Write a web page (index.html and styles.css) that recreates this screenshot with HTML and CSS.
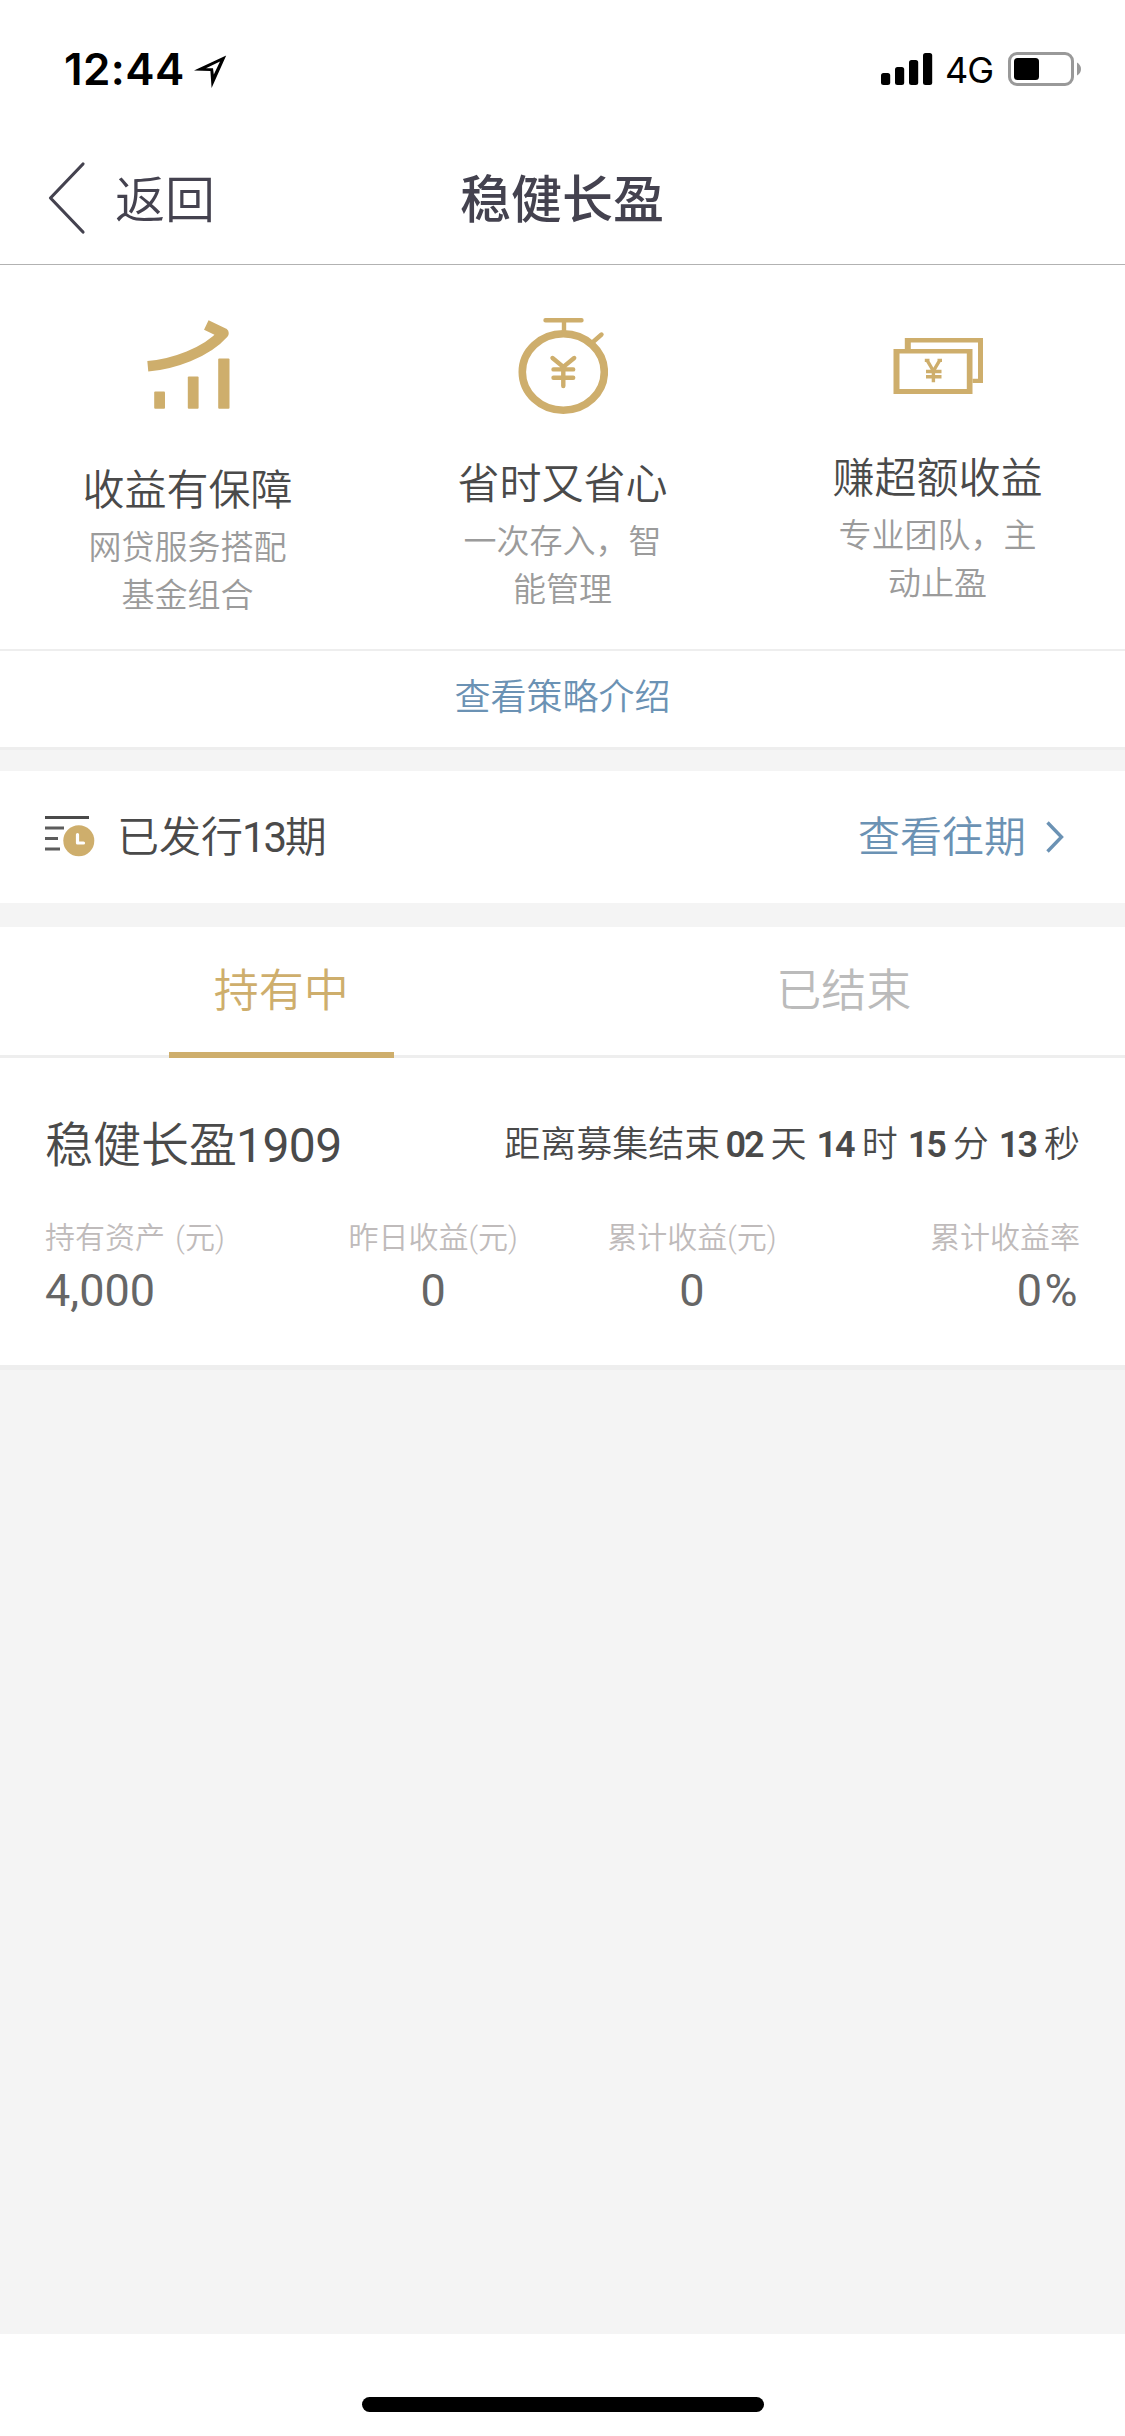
FILE: index.html
```html
<!DOCTYPE html>
<html lang="zh-CN">
<head>
<meta charset="utf-8">
<title>稳健长盈</title>
<link rel="stylesheet" href="styles.css">
</head>
<body>
<div class="status">
  <div class="status-left">
    <span class="clock">12:44</span>
    <svg class="location" width="34" height="34" viewBox="0 0 34 34"><path fill-rule="evenodd" d="M1 16.500 33.200 1.500 18.600 34 17.400 17ZM13 14.200 20 14.200 20.800 20.500 27 7.500Z"/></svg>
  </div>
  <div class="status-right">
    <svg width="52" height="34" viewBox="0 0 52 34"><rect x="0" y="21" width="9.200" height="12" rx="2.500"/><rect x="14" y="15" width="9.200" height="18" rx="2.500"/><rect x="28" y="8" width="9.200" height="25" rx="2.500"/><rect x="42" y="1" width="9.200" height="32" rx="2.500"/></svg>
    <span class="network">4G</span>
    <svg class="battery" width="74" height="34" viewBox="0 0 74 34"><rect x="1.500" y="1.500" width="63" height="31" rx="7.500" fill="none" stroke="#999" stroke-width="3"/><rect x="6" y="6" width="25" height="22" rx="3.500"/><path d="M69 10.500q4 2.500 4 6.500t-4 6.500z" fill="#999"/></svg>
  </div>
</div>
<header class="navbar">
  <a class="back">
    <svg width="38" height="74" viewBox="0 0 38 74"><path d="M35 3 2.500 37 35 71" fill="none" stroke="#44424f" stroke-width="3.200" stroke-linecap="round" stroke-linejoin="round"/></svg>
    <span>返回</span>
  </a>
  <h1 class="title">稳健长盈</h1>
</header>
<section class="features">
  <div class="feature">
    <svg width="90" height="102" viewBox="0 0 90 102"><g fill="#ceae6c"><rect x="11.200" y="73.500" width="10.800" height="17.300" rx="1"/><rect x="44.800" y="58.500" width="10.800" height="32.300" rx="1"/><rect x="75.200" y="40.500" width="11.300" height="50.300" rx="1"/></g><path d="M4.800 48.300C30 46 63 35 80.500 15.200L63.300 7" fill="none" stroke="#ceae6c" stroke-width="10.500" stroke-linejoin="round"/></svg>
    <h2>收益有保障</h2>
    <p>网贷服务搭配基金组合</p>
  </div>
  <div class="feature">
    <svg width="90" height="96" viewBox="0 0 90 96"><g fill="none" stroke="#ceae6c" stroke-linecap="round"><ellipse cx="45.300" cy="54" rx="41" ry="38.200" stroke-width="7.600"/><path d="M27.500 2.200H63.500M46 2.200V14M75 24 83.500 16.500" stroke-width="4.400"/><path d="M34.500 40 45.300 49 56.200 40M35.500 51.400H55.200M35.500 59.700H55.200M45.300 49V68" stroke-width="4.400"/></g></svg>
    <h2>省时又省心</h2>
    <p>一次存入，智能管理</p>
  </div>
  <div class="feature">
    <svg width="90" height="90" viewBox="0 0 90 90"><g fill="#ceae6c"><path fill-rule="evenodd" d="M.5 31H79.500V76H.5ZM6.500 35.500V71H73.800V35.500Z"/><path d="M11.800 31V20H90V65H79.500V60.800H85V24.600H17.800V31Z"/></g><path d="M34 42.200 40.400 53 46.800 42.200M33 53.500H48.500M33 58.700H48.500M40.400 52V64.300M31.800 42.400H36.500M44.500 42.400H49" fill="none" stroke="#ceae6c" stroke-width="3.400"/></svg>
    <h2>赚超额收益</h2>
    <p>专业团队，主动止盈</p>
  </div>
</section>
<a class="strategy">查看策略介绍</a>
<section class="issued">
  <svg width="50" height="46" viewBox="0 0 50 46"><path d="M0 3.500H44" stroke="#4a4a4a" stroke-width="3.200"/><path d="M0 14H19M0 24.500H13M0 35H15" stroke="#5c5c5c" stroke-width="3"/><circle cx="33.800" cy="26.700" r="15.500" fill="#ceae6c"/><path d="M32.500 20.500V29H38.500" fill="none" stroke="#fff" stroke-width="3.200" stroke-linecap="round" stroke-linejoin="round"/></svg>
  <span class="issued-count">已发行<span class="number">13</span>期</span>
  <a class="history"><span>查看往期</span><svg width="20" height="34" viewBox="0 0 20 34"><path d="M2.500 2.500 16.500 17 2.500 31.500" fill="none" stroke="#6b92b4" stroke-width="3.400"/></svg></a>
</section>
<nav class="tabs">
  <div class="tab"><span class="tab-label active">持有中</span></div>
  <div class="tab"><span class="tab-label">已结束</span></div>
</nav>
<section class="holding">
  <div class="holding-head">
    <h3>稳健长盈<span class="serial">1909</span></h3>
    <div class="countdown">距离募集结束<b>02</b>天<b>14</b>时<b>15</b>分<b>13</b>秒</div>
  </div>
  <dl class="stats">
    <div><dt>持有资产 (元)</dt><dd>4,000</dd></div>
    <div><dt>昨日收益(元)</dt><dd>0</dd></div>
    <div><dt>累计收益(元)</dt><dd>0</dd></div>
    <div><dt>累计收益率</dt><dd class="rate">0%</dd></div>
  </dl>
</section>
<footer class="home"><div class="home-bar"></div></footer>
</body>
</html>
```
FILE: styles.css
```css
* { box-sizing: border-box; margin: 0; padding: 0; }
body {
  width: 1125px;
  height: 2436px;
  display: flex;
  flex-direction: column;
  background: #f4f4f4;
  color: #4a4a4a;
  font-family: Roboto, "Noto Sans CJK SC", sans-serif;
  font-weight: 350;
}
svg { display: block; flex: none; }

.status {
  height: 132px;
  padding: 52px 43px 0 64px;
  display: flex;
  justify-content: space-between;
  align-items: flex-start;
  background: #fff;
  color: #000;
}
.status-left, .status-right { display: flex; height: 34px; align-items: center; }
.clock { font: 600 44px/34px Inter, sans-serif; width: 121px; letter-spacing: .4px; }
.location { margin: 4px 0 0 8px; }
.network { font: 400 36px/34px Inter, sans-serif; margin: 1px 0 0 12px; width: 63px; letter-spacing: -1px; }

.navbar {
  height: 133px;
  border-bottom: 1px solid #b2b2b2;
  padding: 6px 49px 0 48px;
  display: grid;
  grid-template-columns: 1fr auto 1fr;
  align-items: center;
  background: #fff;
  color: #44424f;
  line-height: 60px;
}
.back { display: flex; align-items: center; gap: 29px; font-size: 50px; }
.back svg { margin-top: -7px; }
.title { font-size: 51px; font-weight: 500; }

.features {
  height: 386px;
  border-bottom: 2px solid #eee;
  display: grid;
  grid-template-columns: repeat(3, 1fr);
  background: #fff;
}
.feature { display: flex; flex-direction: column; align-items: center; padding-top: 53px; }
.feature h2 { margin-top: 41px; font-size: 42px; line-height: 60px; font-weight: 350; }
.feature p { width: 225px; margin-top: 3px; font-size: 33px; line-height: 48px; color: #9b9b9b; text-align: center; }

.strategy {
  height: 99px;
  border-bottom: 3px solid #eee;
  background: #fff;
  color: #6b92b4;
  font-size: 36px;
  line-height: 94px;
  text-align: center;
}

.issued {
  height: 132px;
  margin: 21px 0 24px;
  padding: 0 60px 0 45px;
  display: flex;
  align-items: center;
  background: #fff;
  font-size: 42px;
  line-height: 63px;
}
.issued-count { margin-left: 22px; }
.number { margin-left: -1px; letter-spacing: -2.2px; font-weight: 400; }
.history { margin-left: auto; display: flex; align-items: center; gap: 19px; color: #6b92b4; }

.tabs { height: 131px; display: grid; grid-template-columns: 1fr 1fr; border-bottom: 3px solid #eee; background: #fff; }
.tab { display: flex; justify-content: center; }
.tab-label { width: 225px; height: 131px; font-size: 45px; line-height: 129px; text-align: center; color: #bbb; }
.tab-label.active { color: #ceae6c; border-bottom: 6px solid #ceae6c; }

.holding { height: 312px; padding: 58px 45px 0; border-bottom: 5px solid #eee; background: #fff; }
.holding-head { display: flex; justify-content: space-between; line-height: 60px; }
.holding h3 { font-size: 48px; font-weight: 350; }
.serial { margin-left: -1px; letter-spacing: -.6px; font-weight: 400; }
.countdown { font-size: 36px; line-height: 58px; }
.countdown b { font-weight: 600; margin: 0 8px 0 10px; letter-spacing: -2px; }
.countdown b:first-child { margin-left: 5px; }
.stats { display: grid; grid-template-columns: repeat(4, 1fr); margin-top: 42px; text-align: center; }
.stats > :first-child { text-align: left; word-spacing: 3px; }
.stats > :last-child { text-align: right; }
.stats dt { font-size: 30px; line-height: 40px; color: #bfbbbb; }
.stats dd { margin-top: 6px; font-size: 45px; line-height: 54px; font-weight: 400; color: #666; }
.stats .rate { letter-spacing: 2.5px; }

.home { height: 102px; margin-top: auto; padding-top: 63px; background: #fff; }
.home-bar { width: 402px; height: 15px; margin: 0 auto; border-radius: 8px; background: #000; }
```
